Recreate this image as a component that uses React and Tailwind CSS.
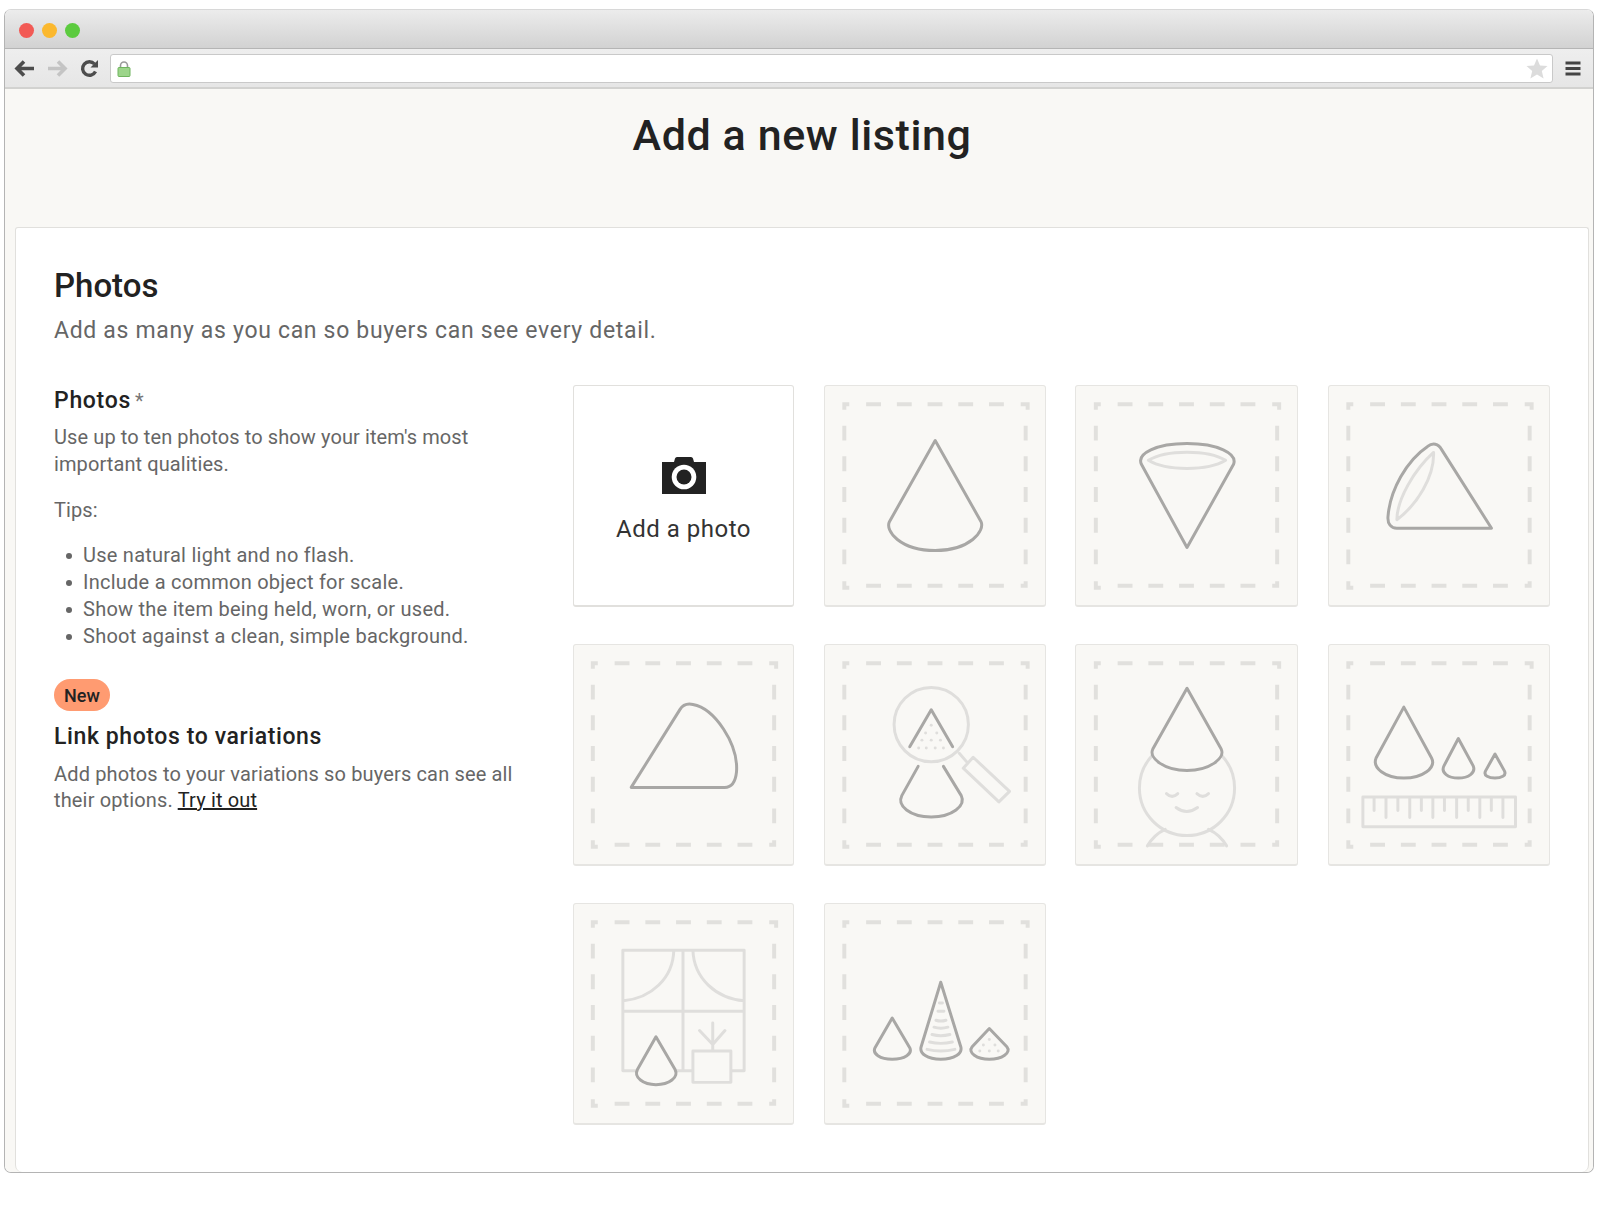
import React from 'react';

const dark = '#a8a7a5';
const light = '#dfdedc';
const bg = '#f9f8f5';

const tips = [
  'Use natural light and no flash.',
  'Include a common object for scale.',
  'Show the item being held, worn, or used.',
  'Shoot against a clean, simple background.',
];

const Frame = () => (
  <path
    fill="none"
    stroke="#e1e0dd"
    strokeWidth="4"
    d="M17 18.5H24 M41 18.5H56 M72 18.5H87 M103 18.5H118 M134 18.5H149 M165 18.5H180 M197 18.5H204 V24 M19 17V24 M19 40V55 M19 71V86 M19 102V117 M19 133V148 M19 165V180 M19 197V203.5 H24 M41 201.5H56 M72 201.5H87 M103 201.5H118 M134 201.5H149 M165 201.5H180 M197 201.5H204 M202 197V203 M202 40V55 M202 71V86 M202 102V117 M202 133V148 M202 165V180"
  />
);

const Dots = ({ points }) => (
  <g fill={light}>
    {points.map(([x, y]) => (
      <circle key={`${x}-${y}`} cx={x} cy={y} r="1.5" />
    ))}
  </g>
);

const line = { fill: 'none', strokeWidth: 3, strokeLinejoin: 'round', strokeLinecap: 'round' };

const Art = ({ name }) => {
  if (name === 'front') {
    return <path {...line} stroke={dark} d="M110.7 55 L64.5 137 C60 146 75 166 110.7 166 C146 166 161 146 157 137 Z" />;
  }
  if (name === 'bottom') {
    return (
      <>
        <path {...line} stroke={light} d="M72 75 C90 64 132 64 150 75 C132 86 90 86 72 75Z" />
        <path {...line} stroke={dark} d="M111 163 L65 79 C60 68 80 58 111 58 C142 58 162 68 158 79 Z" />
      </>
    );
  }
  if (name === 'side') {
    return (
      <>
        <path {...line} stroke={light} d="M105 67 C85 85 68 115 68 135 C88 120 106 92 105 67Z" />
        <path {...line} stroke={dark} d="M163.5 143.5 L113 64 C110 58 104 57 99 61 C78 75 61 105 59 132 C58.5 139 62 143.5 68 143.5 Z" />
      </>
    );
  }
  if (name === 'back') {
    return <path {...line} stroke={dark} d="M57.7 143.7 L107 65 C110 60 115 59 120 60 C142 64 166 100 164 128 C163 138 159 143.7 152 143.7 Z" />;
  }
  if (name === 'detail') {
    return (
      <>
        <circle {...line} stroke={light} cx="106.7" cy="80.3" r="37.5" />
        <path {...line} stroke={light} d="M135 109.3 L142.3 117.7 M149 113.3 L185.7 147.7 L175 158.3 L139 124.3 Z" />
        <Dots points={[[106.7, 81], [101, 88.7], [112.3, 88.7], [97.3, 96], [106.7, 96], [116, 96], [94, 104], [101.7, 104], [110.7, 104], [119, 104]]} />
        <path {...line} stroke={dark} d="M85 102.7 L106.7 65.3 L128.3 102.7" />
        <path {...line} stroke={dark} d="M93.5 122.5 L77 152 C72 162 85 173.5 106.7 173.5 C128 173.5 142 162 137 152 L119 122.5" />
      </>
    );
  }
  if (name === 'worn') {
    return (
      <>
        <circle {...line} stroke={light} cx="111" cy="144.3" r="48" />
        <path {...line} stroke={light} d="M90.3 150 Q96 155.5 101.7 150 M121 150 Q127 155.5 132.7 150 M100 164 Q110.7 172 121.7 164 M71 202.7 Q78 191 89 186 M132.7 186 Q144 191 151 202.7" />
        <path {...line} stroke={dark} fill={bg} d="M111 43.7 L76.5 105 C72 114 88 126.7 111 126.7 C134 126.7 150 114 145.5 105 Z" />
      </>
    );
  }
  if (name === 'scale') {
    return (
      <>
        <path {...line} stroke={dark} d="M75 62.7 L47 114 C43 124 56 134.3 75 134.3 C94 134.3 108 124 103 114 Z" />
        <path {...line} stroke={dark} d="M130 94.3 L115.5 122 C112 129 120 134.3 130 134.3 C140 134.3 148 129 145 122 Z" />
        <path {...line} stroke={dark} d="M167 110 L157.5 127 C155 132 161 134.3 167 134.3 C173 134.3 179 132 176.5 127 Z" />
        <rect {...line} stroke={light} x="33.7" y="153.3" width="154" height="30" />
        <path
          {...line}
          stroke={light}
          d="M45 154V167 M57 154V174 M69 154V167 M81 154V174 M92.7 154V167 M104.3 154V174 M116 154V167 M128.3 154V174 M140 154V167 M151.7 154V174 M163.3 154V167 M175 154V174"
        />
      </>
    );
  }
  if (name === 'window') {
    return (
      <>
        <path
          {...line}
          stroke={light}
          d="M49.3 46.7 H171.7 V168.3 H49.3 Z M110 46.7 V168.3 M49.3 108.3 H171.7 M100.7 46.7 C100 75 78 95 50 97.7 M120 46.7 C121 75 143 95 171.7 97.7 M140 120 V148 M126.7 127.7 L140 141.7 L152.3 127.7"
        />
        <rect {...line} stroke={light} fill={bg} x="120" y="148.3" width="38.3" height="31.7" />
        <path {...line} stroke={dark} fill={bg} d="M82.7 134 L64 167 C60 175 70 182.3 82.7 182.3 C96 182.3 106 175 102 167 Z" />
      </>
    );
  }
  return (
    <>
      <path
        {...line}
        stroke={light}
        d="M115 100H118 M113.5 108.3H119.5 M111.5 117.3Q116.3 119 121.5 117.3 M109.5 124.3Q116.3 126.5 123.5 124.3 M107.5 131.7Q116.3 134 125.5 131.7 M105 139.3Q116.3 142 128 139.3 M102.5 146.7Q116.3 150 130.5 146.7"
      />
      <Dots points={[[165.3, 136.7], [159.3, 142.3], [171, 142.3], [155.7, 148.3], [165.3, 148.3], [174.3, 148.3]]} />
      <path {...line} stroke={dark} d="M67.3 115 L50 145 C47 151 55 156.7 67.3 156.7 C80 156.7 88 151 85 145 Z" />
      <path {...line} stroke={dark} d="M116.3 79 L96.5 144 C94.5 151 103 156.7 116.3 156.7 C130 156.7 138.5 151 136.5 144 Z" />
      <path {...line} stroke={dark} d="M165.3 125.7 L148 144 C143 150 153 156.7 165.3 156.7 C178 156.7 188 150 183 144 Z" />
    </>
  );
};

const Tile = ({ name }) => (
  <div className="h-[222px] rounded-[3px] border border-[#e6e5e2] border-b-2 bg-[#f9f8f5]">
    <svg viewBox="0 0 221 221" className="h-full w-full">
      <Frame />
      <Art name={name} />
    </svg>
  </div>
);

const AddPhoto = () => (
  <div className="flex h-[222px] flex-col items-center rounded-[3px] border border-[#e1e0dd] border-b-2 bg-white pt-[69px]">
    <svg width="46" height="40" viewBox="0 0 46 40">
      <path
        fill="#222222"
        d="M1 7 H13 L14 3.5 Q14.5 2 16 2 H30 Q31.5 2 32 3.5 L33 7 H45 V39 H1 Z"
      />
      <circle cx="23" cy="22" r="12.3" fill="#ffffff" />
      <circle cx="23" cy="22" r="7.5" fill="#222222" />
    </svg>
    <span className="mt-[18px] text-[24px] leading-[32px] tracking-[0.5px] text-[#333333]">Add a photo</span>
  </div>
);

const Toolbar = () => (
  <div className="flex h-[40px] items-center border-b-2 border-[#d2d2d0] bg-gradient-to-b from-[#eeeeee] to-[#e6e6e6]">
    <svg width="105" height="40" viewBox="0 0 105 40" className="shrink-0">
      <path d="M29 20.5H12 M19 13.5L12 20.5L19 27.5" fill="none" stroke="#4d4d4d" strokeWidth="3.6" />
      <path d="M43 20.5H60 M53 13.5L60 20.5L53 27.5" fill="none" stroke="#c4c4c4" strokeWidth="3.6" />
      <path d="M90.5 23.5A6.8 6.8 0 1 1 89.5 16" fill="none" stroke="#4d4d4d" strokeWidth="3.4" />
      <path d="M93 12V19.5H85.5Z" fill="#4d4d4d" />
    </svg>
    <div className="flex h-[29px] min-w-0 flex-1 items-center justify-between rounded-[3px] border border-[#c9c9c9] bg-white pl-[6px] pr-[4px]">
      <svg width="14" height="17" viewBox="0 0 14 17">
        <path d="M3.5 8V5.5a3.5 3.5 0 0 1 7 0V8" fill="none" stroke="#9a9a9a" strokeWidth="1.6" />
        <rect x="1" y="7.5" width="12" height="9" rx="1" fill="#9cd58a" stroke="#6fb45e" />
      </svg>
      <svg width="22" height="21" viewBox="0 0 22 21">
        <path fill="#dcdcdc" d="M11 0.5L14 7.5L21.5 8L15.8 13L17.6 20.5L11 16.5L4.4 20.5L6.2 13L0.5 8L8 7.5Z" />
      </svg>
    </div>
    <div className="flex w-[40px] shrink-0 justify-center">
      <svg width="16" height="15" viewBox="0 0 16 15">
        <path d="M0.5 2H15.5 M0.5 7.5H15.5 M0.5 13H15.5" stroke="#444444" strokeWidth="3" />
      </svg>
    </div>
  </div>
);

export default function App() {
  return (
    <div className="h-[1208px] bg-white pl-[4px] pr-[6px] pt-[9px] font-['Roboto',sans-serif]">
      <div className="flex h-[1164px] flex-col overflow-hidden rounded-[7px] border border-[#b4b4b4] border-t-[#d8d8d8]">
        <div className="flex h-[39px] shrink-0 items-center gap-[8px] border-b border-[#b5b5b5] bg-gradient-to-b from-[#ececec] to-[#d2d2d2] pl-[14px] pt-[2px]">
          <span className="h-[15px] w-[15px] rounded-full bg-[#f25a55]" />
          <span className="h-[15px] w-[15px] rounded-full bg-[#fbb82e]" />
          <span className="h-[15px] w-[15px] rounded-full bg-[#5ccb3f]" />
        </div>
        <Toolbar />
        <div className="flex min-h-0 flex-1 flex-col bg-[#f9f8f5] pl-[10px] pr-[4px]">
          <div className="flex h-[138px] shrink-0 justify-center pt-[18px]">
            <h1 className="text-[43px] font-medium leading-[56px] tracking-[0.6px] text-[#222222]">Add a new listing</h1>
          </div>
          <div className="flex-1 rounded-b-[7px] rounded-t-[3px] border border-b-0 border-[#e1e0dd] bg-white pl-[38px] pr-[38px] pt-[37px]">
            <h2 className="text-[33px] font-medium leading-[42px] text-[#222222]">Photos</h2>
            <p className="mt-[7px] text-[23px] leading-[34px] tracking-[0.68px] text-[#666666]">
              Add as many as you can so buyers can see every detail.
            </p>
            <div className="mt-[37px] flex">
              <div className="w-[519px] shrink-0 pt-[1px] text-[20px] tracking-[0.1px] text-[#666666]">
                <h3 className="text-[23px] font-medium leading-[30px] tracking-[0.7px] text-[#222222]">
                  Photos<span className="ml-[4px] text-[20px] font-normal tracking-normal text-[#777777]">*</span>
                </h3>
                <p className="mt-[8px] w-[460px] leading-[27px]">
                  Use up to ten photos to show your item's most important qualities.
                </p>
                <p className="mt-[19px] leading-[27px]">Tips:</p>
                <ul className="mt-[18px] leading-[27px] tracking-[0.25px]">
                  {tips.map((tip) => (
                    <li key={tip} className="flex items-center pl-[12px]">
                      <span className="mr-[11px] h-[6px] w-[6px] shrink-0 rounded-full bg-[#666666]" />
                      {tip}
                    </li>
                  ))}
                </ul>
                <span className="mt-[29px] flex h-[32px] w-[56px] items-center justify-center rounded-full bg-[#ff9b71] text-[18px] font-medium text-[#222222]">
                  New
                </span>
                <h3 className="mt-[11px] text-[23px] font-medium leading-[30px] tracking-[0.6px] text-[#222222]">
                  Link photos to variations
                </h3>
                <p className="mt-[9px] w-[480px] leading-[26px] tracking-[0.15px]">
                  Add photos to your variations so buyers can see all their options.{' '}
                  <a href="#" className="text-[#222222] underline">Try it out</a>
                </p>
              </div>
              <div className="grid flex-1 grid-cols-[221px_222px_223px_222px] gap-x-[29.5px] gap-y-[37px]">
                <AddPhoto />
                <Tile name="front" />
                <Tile name="bottom" />
                <Tile name="side" />
                <Tile name="back" />
                <Tile name="detail" />
                <Tile name="worn" />
                <Tile name="scale" />
                <Tile name="window" />
                <Tile name="group" />
              </div>
            </div>
          </div>
        </div>
      </div>
    </div>
  );
}
